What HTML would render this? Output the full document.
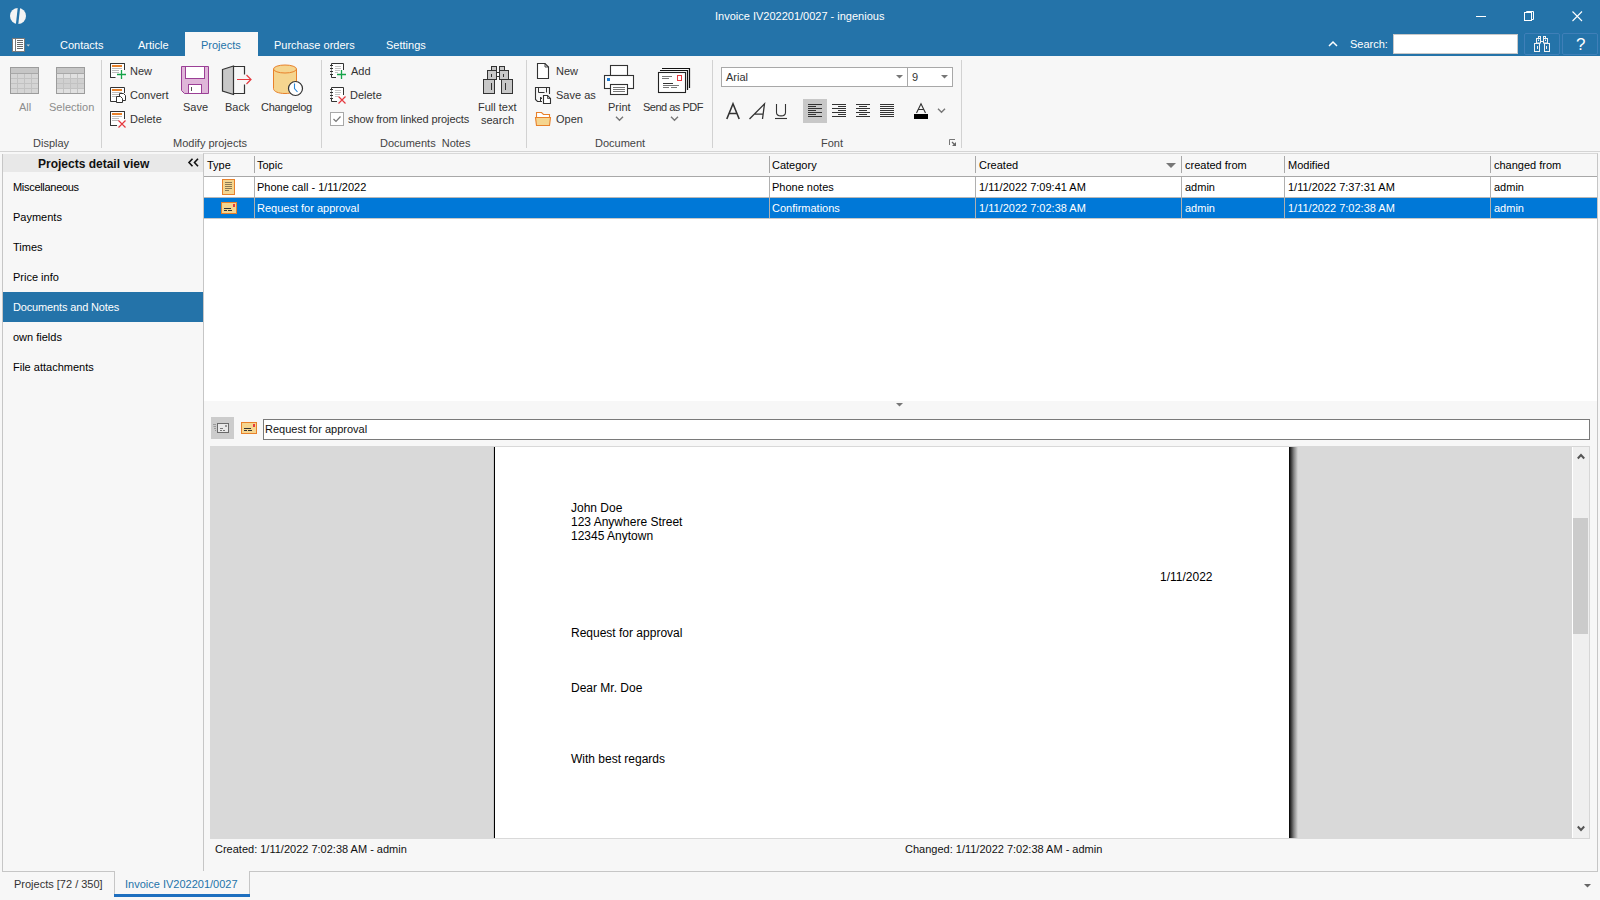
<!DOCTYPE html>
<html><head><meta charset="utf-8">
<style>
*{margin:0;padding:0;box-sizing:border-box}
html,body{width:1600px;height:900px;overflow:hidden;background:#f7f7f7;font-family:"Liberation Sans",sans-serif;font-size:11px;color:#000}
.a{position:absolute}
.t{position:absolute;white-space:nowrap;line-height:13px;font-size:11px}
.w{color:#fff}
svg{position:absolute;overflow:visible}
</style></head><body>

<!-- ===== TITLE BAR ===== -->
<div class="a" style="left:0;top:0;width:1600px;height:56px;background:#2473a9"></div>
<svg style="left:10px;top:8px" width="16" height="16" viewBox="0 0 16 16">
 <circle cx="8" cy="8" r="8" fill="#f4f4f4"/>
 <polygon points="7.8,-1 10.2,-1 8.2,17 5.8,17" fill="#2473a9"/>
</svg>
<div class="t w" style="left:715px;top:10px">Invoice IV202201/0027 - ingenious</div>
<!-- window controls -->
<div class="a" style="left:1476px;top:16px;width:10px;height:1px;background:#fff"></div>
<svg style="left:1523px;top:10px" width="12" height="12" viewBox="0 0 12 12">
 <rect x="1.5" y="2.5" width="7" height="8" fill="none" stroke="#fff" stroke-width="1"/>
 <path d="M3.5 2.5V1.5H10.5V9.5H8.5" fill="none" stroke="#fff" stroke-width="1"/>
</svg>
<svg style="left:1572px;top:11px" width="11" height="11" viewBox="0 0 11 11">
 <path d="M0.5 0.5L10 10M10 0.5L0.5 10" stroke="#fff" stroke-width="1.1"/>
</svg>

<!-- menu icon -->
<svg style="left:12px;top:38px" width="20" height="14" viewBox="0 0 20 14">
 <rect x="0.5" y="0.5" width="12" height="13" fill="#fff" stroke="#7a7a7a" stroke-width="1"/>
 <rect x="3" y="1" width="1" height="12" fill="#7a7a7a"/>
 <path d="M5 2.5h6M5 4.5h6M5 6.5h6M5 8.5h6M5 10.5h6" stroke="#6a6a6a" stroke-width="1"/>
 <polygon points="14.5,6.5 18,6.5 16.25,8.5" fill="#ccc"/>
</svg>

<!-- tabs -->
<div class="t w" style="left:60px;top:39px">Contacts</div>
<div class="t w" style="left:138px;top:39px">Article</div>
<div class="a" style="left:185px;top:32px;width:73px;height:24px;background:#f7f7f7"></div>
<div class="t" style="left:201px;top:39px;color:#2473a9">Projects</div>
<div class="t w" style="left:274px;top:39px">Purchase orders</div>
<div class="t w" style="left:386px;top:39px">Settings</div>

<!-- search area -->
<svg style="left:1328px;top:41px" width="10" height="6" viewBox="0 0 10 6">
 <path d="M1 5L5 1L9 5" fill="none" stroke="#fff" stroke-width="1.5"/>
</svg>
<div class="t w" style="left:1350px;top:38px">Search:</div>
<div class="a" style="left:1393px;top:34px;width:125px;height:20px;background:#fff;border:1px solid #c8c8c8"></div>
<div class="a" style="left:1524px;top:33px;width:36px;height:22px;border:1px solid #3f7fb8;border-radius:2px"></div>
<div class="a" style="left:1562px;top:33px;width:36px;height:22px;border:1px solid #3f7fb8;border-radius:2px"></div>
<svg style="left:1534px;top:36px" width="17" height="17" viewBox="0 0 17 17">
 <rect x="4.5" y="0.5" width="2" height="2" fill="none" stroke="#f2f2f2"/>
 <rect x="9.5" y="0.5" width="2" height="2" fill="none" stroke="#f2f2f2"/>
 <rect x="2.5" y="2.5" width="4" height="4.5" fill="none" stroke="#f2f2f2"/>
 <rect x="9.5" y="2.5" width="4" height="4.5" fill="none" stroke="#f2f2f2"/>
 <path d="M6.5 5.5H9.5" stroke="#f2f2f2"/>
 <rect x="0.5" y="7.5" width="5" height="8" fill="none" stroke="#f2f2f2"/>
 <rect x="10.5" y="7.5" width="5" height="8" fill="none" stroke="#f2f2f2"/>
 <path d="M4.5 3.5V5M11.5 3.5V5M3.5 10V13M12.5 10V13" stroke="#f2f2f2"/>
</svg>
<div class="t w" style="left:1576px;top:36px;font-size:17px;line-height:17px">?</div>

<!-- ===== RIBBON ===== -->
<!-- Display group -->
<svg style="left:10px;top:67px" width="30" height="28" viewBox="0 0 30 28">
 <rect x="0.5" y="0.5" width="28" height="26" fill="#d5d5d5" stroke="#9c9c9c"/>
 <rect x="1" y="1" width="27" height="5" fill="#c6c6c6"/>
 <path d="M1 6.5H28M1 11.5H28M1 16.5H28M1 21.5H28M7.5 7V26M14.5 7V26M21.5 7V26" stroke="#c2c2c2" stroke-width="1"/>
 <path d="M0.5 6.5H28.5" stroke="#a8a8a8"/>
</svg>
<svg style="left:56px;top:67px" width="30" height="28" viewBox="0 0 30 28">
 <rect x="0.5" y="0.5" width="28" height="26" fill="#d0d0d0" stroke="#9c9c9c"/>
 <rect x="1" y="1" width="27" height="5" fill="#c6c6c6"/>
 <rect x="1" y="7" width="27" height="4" fill="#e0e0e0"/>
 <rect x="1" y="22" width="27" height="4" fill="#e0e0e0"/>
 <path d="M1 6.5H28M1 11.5H28M1 16.5H28M1 21.5H28M7.5 7V26M14.5 7V26M21.5 7V26" stroke="#c2c2c2" stroke-width="1"/>
 <path d="M0.5 6.5H28.5" stroke="#a8a8a8"/>
</svg>
<div class="t" style="left:19px;top:101px;color:#8c8c8c">All</div>
<div class="t" style="left:49px;top:101px;color:#8c8c8c">Selection</div>
<div class="t" style="left:33px;top:137px;color:#444">Display</div>
<div class="a" style="left:101px;top:60px;width:1px;height:88px;background:#d2d2d2"></div>

<!-- Modify projects -->
<svg style="left:110px;top:63px" width="17" height="17" viewBox="0 0 17 17">
 <path d="M5.5 14.5H0.5V0.5H14.5V7" fill="#fff" stroke="#333"/>
 <rect x="1" y="1" width="13" height="13" fill="#fff"/>
 <path d="M0.5 14.5V0.5H14.5V7M0.5 14.5H5" fill="none" stroke="#333"/>
 <rect x="2" y="2" width="10" height="2" fill="#e8812b"/>
 <path d="M2 5.5H12M2 7.5H9M2 9.5H9" stroke="#bdbdbd"/>
 <path d="M7 11.5H16M11.5 7V16" stroke="#16a34a" stroke-width="1.3"/>
</svg>
<svg style="left:110px;top:87px" width="17" height="17" viewBox="0 0 17 17">
 <path d="M6 14.5H0.5V0.5H14.5V6" fill="#fff" stroke="#333"/>
 <rect x="2" y="2" width="10" height="2" fill="#e8812b"/>
 <path d="M2 5.5H12M2 7.5H9M2 9.5H7" stroke="#bdbdbd"/>
 <path d="M9.5 9.5V6.5H13.5L15.5 8.5V13.5H12.5" fill="#fff" stroke="#333"/>
 <path d="M6.5 9.5H10.5L12.5 11.5V15.5H6.5Z" fill="#fff" stroke="#333"/>
</svg>
<svg style="left:110px;top:111px" width="17" height="17" viewBox="0 0 17 17">
 <path d="M0.5 14.5V0.5H14.5V8M0.5 14.5H7" fill="#fff" stroke="#333"/>
 <rect x="1" y="1" width="13" height="13" fill="#fff"/>
 <path d="M0.5 14.5V0.5H14.5V8M0.5 14.5H6" fill="none" stroke="#333"/>
 <rect x="2" y="2" width="10" height="2" fill="#e8812b"/>
 <path d="M2 5.5H12M2 7.5H9M2 9.5H9" stroke="#bdbdbd"/>
 <path d="M8.5 9.5L15.5 16.5M15.5 9.5L8.5 16.5" stroke="#e5393f" stroke-width="1.2"/>
</svg>
<div class="t" style="left:130px;top:65px;color:#333">New</div>
<div class="t" style="left:130px;top:89px;color:#333">Convert</div>
<div class="t" style="left:130px;top:113px;color:#333">Delete</div>

<svg style="left:181px;top:66px" width="29" height="29" viewBox="0 0 29 29">
 <path d="M0.5 0.5H27.5V27.5H3.5L0.5 24.5Z" fill="#dfb6d9" stroke="#9b3f96"/>
 <rect x="4.5" y="0.5" width="19" height="12" fill="#fff" stroke="#9b3f96"/>
 <rect x="7.5" y="18.5" width="13" height="9" fill="#fff" stroke="#9b3f96"/>
 <path d="M10.5 21V25" stroke="#555"/>
</svg>
<svg style="left:222px;top:65px" width="31" height="31" viewBox="0 0 31 31">
 <path d="M11.5 1.5H22.5V9.5M22.5 19.5V28.5H11.5" fill="none" stroke="#333" stroke-width="1.2"/>
 <path d="M0.5 4.5L11.5 1V29.5L0.5 26Z" fill="#c8c8c8" stroke="#333" stroke-width="1.2"/>
 <path d="M15 14.5H29M24.5 10L29 14.5L24.5 19" fill="none" stroke="#e5393f" stroke-width="1.2"/>
</svg>
<svg style="left:273px;top:64px" width="32" height="33" viewBox="0 0 32 33">
 <path d="M0.5 5V24.5C0.5 27.5 5.5 29.5 12 29.5C18.5 29.5 23.5 27.5 23.5 24.5V5" fill="#f5d58f" stroke="#e8812b"/>
 <ellipse cx="12" cy="5" rx="11.5" ry="4" fill="#f5d58f" stroke="#e8812b"/>
 <circle cx="22.5" cy="24.5" r="7" fill="#fff" stroke="#333" stroke-width="1.2"/>
 <path d="M21.5 19.5V24.5L24.5 28" fill="none" stroke="#2b88d8" stroke-width="1.1"/>
</svg>
<div class="t" style="left:183px;top:101px;color:#333">Save</div>
<div class="t" style="left:225px;top:101px;color:#333">Back</div>
<div class="t" style="left:261px;top:101px;color:#333;letter-spacing:-0.25px">Changelog</div>
<div class="t" style="left:173px;top:137px;color:#444">Modify projects</div>
<div class="a" style="left:321px;top:60px;width:1px;height:88px;background:#d2d2d2"></div>

<!-- Documents Notes -->
<svg style="left:330px;top:63px" width="17" height="17" viewBox="0 0 17 17">
 <path d="M6 14.5H1.5V0.5H13.5V7" fill="#fff" stroke="#333"/>
 <path d="M0 2.5H3M0 5.5H3M0 8.5H3M0 11.5H3" stroke="#333"/>
 <path d="M1.5 3.5V4.5M1.5 6.5V7.5M1.5 9.5V10.5" stroke="#f7f7f7"/>
 <path d="M5 3.5H11M5 5.5H11M5 7.5H10M5 9.5H8" stroke="#c4c4c4"/>
 <path d="M7 11.5H16M11.5 7V16" stroke="#16a34a" stroke-width="1.3"/>
</svg>
<svg style="left:330px;top:87px" width="17" height="17" viewBox="0 0 17 17">
 <path d="M7 14.5H1.5V0.5H13.5V8" fill="#fff" stroke="#333"/>
 <path d="M0 2.5H3M0 5.5H3M0 8.5H3M0 11.5H3" stroke="#333"/>
 <path d="M1.5 3.5V4.5M1.5 6.5V7.5M1.5 9.5V10.5" stroke="#f7f7f7"/>
 <path d="M5 3.5H11M5 5.5H11M5 7.5H10M5 9.5H8" stroke="#c4c4c4"/>
 <path d="M8.5 9.5L15.5 16.5M15.5 9.5L8.5 16.5" stroke="#e5393f" stroke-width="1.2"/>
</svg>
<svg style="left:330px;top:112px" width="15" height="15" viewBox="0 0 15 15">
 <rect x="0.5" y="0.5" width="13" height="13" fill="#fff" stroke="#a8a8a8"/>
 <path d="M3.5 7L6 9.5L10.5 4.5" fill="none" stroke="#777" stroke-width="1.2"/>
</svg>
<div class="t" style="left:351px;top:65px;color:#333">Add</div>
<div class="t" style="left:350px;top:89px;color:#333">Delete</div>
<div class="t" style="left:348px;top:113px;color:#333;letter-spacing:-0.12px">show from linked projects</div>
<svg style="left:483px;top:66px" width="31" height="29" viewBox="0 0 31 29">
 <rect x="8.5" y="0.5" width="5" height="4" fill="#c8c8c8" stroke="#333"/>
 <rect x="16.5" y="0.5" width="5" height="4" fill="#c8c8c8" stroke="#333"/>
 <rect x="4.5" y="4.5" width="9" height="9" fill="#c8c8c8" stroke="#333"/>
 <rect x="16.5" y="4.5" width="9" height="9" fill="#c8c8c8" stroke="#333"/>
 <rect x="13.5" y="6.5" width="3" height="4" fill="#fff" stroke="#333"/>
 <rect x="0.5" y="13.5" width="11" height="14" fill="#c8c8c8" stroke="#333"/>
 <rect x="18.5" y="13.5" width="11" height="14" fill="#c8c8c8" stroke="#333"/>
 <path d="M8.5 8V11M20.5 8V11M8.5 17V24M22.5 17V24" stroke="#333"/>
</svg>
<div class="t" style="left:478px;top:101px;color:#333">Full text</div>
<div class="t" style="left:481px;top:114px;color:#333">search</div>
<div class="t" style="left:380px;top:137px;color:#444">Documents&nbsp; Notes</div>
<div class="a" style="left:526px;top:60px;width:1px;height:88px;background:#d2d2d2"></div>

<!-- Document -->
<svg style="left:537px;top:63px" width="13" height="17" viewBox="0 0 13 17">
 <path d="M0.5 0.5H8L11.5 4V15.5H0.5Z" fill="#fff" stroke="#333" stroke-width="1.1"/>
 <path d="M8 0.5V4H11.5" fill="none" stroke="#333" stroke-width="0.9"/>
</svg>
<svg style="left:535px;top:87px" width="17" height="17" viewBox="0 0 17 17">
 <path d="M7 14.5H2.5L0.5 12.5V0.5H14.5V7" fill="none" stroke="#333" stroke-width="1.1"/>
 <path d="M3.5 0.5V5.5H9.5M11.5 0.5V5.5" fill="none" stroke="#333"/>
 <path d="M5.5 14.5V11.5H7" fill="none" stroke="#333"/>
 <rect x="5" y="10" width="1.5" height="2" fill="#333"/>
 <path d="M8.5 8.5H12.5L15.5 11.5V16.5H8.5Z" fill="#fff" stroke="#333" stroke-width="1.1"/>
 <path d="M12.5 8.5V11.5H15.5" fill="none" stroke="#333" stroke-width="0.8"/>
</svg>
<svg style="left:535px;top:112px" width="17" height="15" viewBox="0 0 17 15">
 <path d="M1.5 5V0.5H6.5L8.5 2.5H14.5V5" fill="#fff" stroke="#e8812b" stroke-width="1.1"/>
 <path d="M0.5 5.5H15.5L14.5 13.5H1.5Z" fill="#f5d58f" stroke="#e8812b" stroke-width="1.1"/>
</svg>
<div class="t" style="left:556px;top:65px;color:#333">New</div>
<div class="t" style="left:556px;top:89px;color:#333">Save as</div>
<div class="t" style="left:556px;top:113px;color:#333">Open</div>
<svg style="left:604px;top:65px" width="31" height="31" viewBox="0 0 31 31">
 <rect x="6.5" y="0.5" width="17" height="10" fill="#fff" stroke="#333" stroke-width="1.1"/>
 <rect x="0.5" y="10.5" width="29" height="13" fill="#fff" stroke="#333" stroke-width="1.1"/>
 <rect x="3" y="13" width="3" height="3" fill="#1e7ad0"/>
 <rect x="6.5" y="19.5" width="17" height="10" fill="#fff" stroke="#333" stroke-width="1.1"/>
 <path d="M9 22.5H21M9 24.5H21M9 26.5H21" stroke="#777"/>
</svg>
<svg style="left:658px;top:68px" width="33" height="26" viewBox="0 0 33 26">
 <path d="M4 0.5H31.5V20" fill="none" stroke="#111" stroke-width="1.2"/>
 <path d="M2 2.5H29.5V22" fill="none" stroke="#111" stroke-width="1.2"/>
 <rect x="0.5" y="4.5" width="27" height="20" fill="#fff" stroke="#222" stroke-width="1.1"/>
 <rect x="19.5" y="7.5" width="4" height="5" fill="#fff" stroke="#e5393f"/>
 <path d="M4 8.5H14M4 10.5H11M5 15.5H15M5 17.5H21M5 19.5H11M13 19.5H19" stroke="#777"/>
 <path d="M5 15.5H15" stroke="#333"/>
</svg>
<div class="t" style="left:608px;top:101px;color:#333">Print</div>
<div class="t" style="left:643px;top:101px;color:#333;letter-spacing:-0.5px">Send as PDF</div>
<svg style="left:615px;top:116px" width="9" height="5" viewBox="0 0 9 5"><path d="M1 0.8L4.5 4.2L8 0.8" fill="none" stroke="#777" stroke-width="1.4"/></svg>
<svg style="left:670px;top:116px" width="9" height="5" viewBox="0 0 9 5"><path d="M1 0.8L4.5 4.2L8 0.8" fill="none" stroke="#777" stroke-width="1.4"/></svg>
<div class="t" style="left:595px;top:137px;color:#444">Document</div>
<div class="a" style="left:712px;top:60px;width:1px;height:88px;background:#d2d2d2"></div>

<!-- Font -->
<div class="a" style="left:721px;top:67px;width:187px;height:20px;background:#fff;border:1px solid #a8a8a8"></div>
<div class="a" style="left:907px;top:67px;width:46px;height:20px;background:#fff;border:1px solid #a8a8a8"></div>
<div class="t" style="left:726px;top:71px;color:#333">Arial</div>
<div class="t" style="left:912px;top:71px;color:#333">9</div>
<svg style="left:896px;top:75px" width="8" height="4" viewBox="0 0 8 4"><polygon points="0,0 7,0 3.5,3.5" fill="#777"/></svg>
<svg style="left:941px;top:75px" width="8" height="4" viewBox="0 0 8 4"><polygon points="0,0 7,0 3.5,3.5" fill="#777"/></svg>
<svg style="left:726px;top:103px" width="15" height="17" viewBox="0 0 15 17">
 <path d="M0.8 16L7 0.8L13.2 16M3.2 10.5H10.8" fill="none" stroke="#333" stroke-width="1.6"/>
</svg>
<svg style="left:749px;top:103px" width="17" height="17" viewBox="0 0 17 17">
 <path d="M0.5 16L15.5 0.8L13.5 16M5 11.2H13.8" fill="none" stroke="#333" stroke-width="1.3"/>
</svg>
<svg style="left:775px;top:103px" width="13" height="17" viewBox="0 0 13 17">
 <path d="M1.5 1V9.5C1.5 14 10.5 14 10.5 9.5V1" fill="none" stroke="#333" stroke-width="1.1"/>
 <path d="M0 15.5H12" stroke="#333" stroke-width="1.1"/>
</svg>
<div class="a" style="left:803px;top:99px;width:24px;height:24px;background:#c8c8c8"></div>
<svg style="left:808px;top:104px" width="15" height="14" viewBox="0 0 15 14">
 <path d="M0 0.5H14M0 2.5H8M0 4.5H14M0 6.5H8M0 8.5H14M0 10.5H8M0 12.5H14" stroke="#333"/>
</svg>
<svg style="left:832px;top:104px" width="15" height="14" viewBox="0 0 15 14">
 <path d="M0 0.5H14M6 2.5H14M0 4.5H14M6 6.5H14M0 8.5H14M6 10.5H14M0 12.5H14" stroke="#333"/>
</svg>
<svg style="left:856px;top:104px" width="15" height="14" viewBox="0 0 15 14">
 <path d="M0 0.5H14M3 2.5H11M0 4.5H14M3 6.5H11M0 8.5H14M3 10.5H11M0 12.5H14" stroke="#333"/>
</svg>
<svg style="left:880px;top:104px" width="15" height="14" viewBox="0 0 15 14">
 <path d="M0 0.5H14M0 2.5H14M0 4.5H14M0 6.5H14M0 8.5H14M0 10.5H14M0 12.5H14" stroke="#333"/>
</svg>
<svg style="left:914px;top:103px" width="15" height="17" viewBox="0 0 15 17">
 <path d="M2.5 10L7 0.8L11.5 10M4.2 6.5H9.8" fill="none" stroke="#333" stroke-width="1.1"/>
 <rect x="0" y="11" width="14" height="5" fill="#000"/>
</svg>
<svg style="left:937px;top:108px" width="9" height="5" viewBox="0 0 9 5"><path d="M1 0.8L4.5 4.2L8 0.8" fill="none" stroke="#777" stroke-width="1.4"/></svg>
<div class="t" style="left:821px;top:137px;color:#444">Font</div>
<svg style="left:949px;top:139px" width="8" height="8" viewBox="0 0 8 8">
 <path d="M0.5 6V0.5H6" fill="none" stroke="#777"/>
 <path d="M3 3L5.5 5.5" stroke="#666" stroke-width="1.2"/>
 <polygon points="7,3 7,7 3,7" fill="#666"/>
</svg>
<div class="a" style="left:961px;top:60px;width:1px;height:88px;background:#d2d2d2"></div>

<div class="a" style="left:0;top:151px;width:1600px;height:1px;background:#d4d4d4"></div>

<!-- ===== SIDEBAR ===== -->
<div class="a" style="left:2px;top:154px;width:202px;height:718px;border-left:1px solid #c6c6c6;border-right:1px solid #c6c6c6;border-bottom:1px solid #c6c6c6"></div>
<div class="a" style="left:3px;top:154px;width:200px;height:18px;background:#e8e8e8"></div>
<div class="t" style="left:38px;top:158px;font-weight:bold;color:#111;font-size:12px">Projects detail view</div>
<svg style="left:188px;top:158px" width="11" height="9" viewBox="0 0 11 9">
 <path d="M4.5 0.8L1 4.5L4.5 8.2M10 0.8L6.5 4.5L10 8.2" fill="none" stroke="#111" stroke-width="1.6"/>
</svg>
<div class="t" style="left:13px;top:181px;letter-spacing:-0.3px">Miscellaneous</div>
<div class="t" style="left:13px;top:211px">Payments</div>
<div class="t" style="left:13px;top:241px">Times</div>
<div class="t" style="left:13px;top:271px">Price info</div>
<div class="a" style="left:3px;top:292px;width:200px;height:30px;background:#2473a9"></div>
<div class="t w" style="left:13px;top:301px;letter-spacing:-0.15px">Documents and Notes</div>
<div class="t" style="left:13px;top:331px">own fields</div>
<div class="t" style="left:13px;top:361px">File attachments</div>


<!-- ===== GRID ===== -->
<div class="a" style="left:203px;top:153px;width:1395px;height:248px;background:#fff;border-left:1px solid #c6c6c6;border-top:1px solid #d8d8d8;border-right:1px solid #c6c6c6"></div>
<div class="a" style="left:204px;top:154px;width:1393px;height:23px;background:#f7f7f7;border-bottom:1px solid #a8a8a8"></div>


<!-- header -->
<div class="t" style="left:207px;top:159px">Type</div>
<div class="t" style="left:257px;top:159px">Topic</div>
<div class="t" style="left:772px;top:159px">Category</div>
<div class="t" style="left:979px;top:159px">Created</div>
<div class="t" style="left:1185px;top:159px">created from</div>
<div class="t" style="left:1288px;top:159px">Modified</div>
<div class="t" style="left:1494px;top:159px">changed from</div>
<svg style="left:1166px;top:163px" width="10" height="5" viewBox="0 0 10 5"><polygon points="0,0 10,0 5,5" fill="#777"/></svg>
<div class="a" style="left:254px;top:156px;width:1px;height:17px;background:#a8a8a8"></div>
<div class="a" style="left:769px;top:156px;width:1px;height:17px;background:#a8a8a8"></div>
<div class="a" style="left:975px;top:156px;width:1px;height:17px;background:#a8a8a8"></div>
<div class="a" style="left:1181px;top:156px;width:1px;height:17px;background:#a8a8a8"></div>
<div class="a" style="left:1284px;top:156px;width:1px;height:17px;background:#a8a8a8"></div>
<div class="a" style="left:1490px;top:156px;width:1px;height:17px;background:#a8a8a8"></div>
<!-- row 1 -->
<div class="a" style="left:204px;top:197px;width:1393px;height:1px;background:#b8b8b8"></div>
<div class="a" style="left:204px;top:198px;width:1393px;height:20px;background:#0078d7"></div>
<div class="a" style="left:204px;top:218px;width:1393px;height:1px;background:#c8c8c8"></div>
<div class="a" style="left:254px;top:177px;width:1px;height:41px;background:#b0b0b0"></div>
<div class="a" style="left:769px;top:177px;width:1px;height:41px;background:#b0b0b0"></div>
<div class="a" style="left:975px;top:177px;width:1px;height:41px;background:#b0b0b0"></div>
<div class="a" style="left:1181px;top:177px;width:1px;height:41px;background:#b0b0b0"></div>
<div class="a" style="left:1284px;top:177px;width:1px;height:41px;background:#b0b0b0"></div>
<div class="a" style="left:1490px;top:177px;width:1px;height:41px;background:#b0b0b0"></div>
<svg style="left:222px;top:179px" width="14" height="17" viewBox="0 0 14 17">
 <rect x="0.5" y="0.5" width="12" height="15" fill="#f5d58f" stroke="#e8812b"/>
 <path d="M3 3.5H10M3 5.5H10M3 7.5H10M3 9.5H10M3 11.5H7" stroke="#8a7a55"/>
</svg>
<div class="t" style="left:257px;top:181px">Phone call - 1/11/2022</div>
<div class="t" style="left:772px;top:181px">Phone notes</div>
<div class="t" style="left:979px;top:181px">1/11/2022 7:09:41 AM</div>
<div class="t" style="left:1185px;top:181px">admin</div>
<div class="t" style="left:1288px;top:181px">1/11/2022 7:37:31 AM</div>
<div class="t" style="left:1494px;top:181px">admin</div>
<svg style="left:221px;top:202px" width="17" height="13" viewBox="0 0 17 13">
 <rect x="0.5" y="0.5" width="15" height="11" fill="#f5d58f" stroke="#e8812b"/>
 <rect x="12" y="2" width="2" height="3" fill="#e5393f"/>
 <path d="M3 6.5H10M3 8.5H6M7 8.5H11" stroke="#333"/>
</svg>
<div class="t w" style="left:257px;top:202px">Request for approval</div>
<div class="t w" style="left:772px;top:202px">Confirmations</div>
<div class="t w" style="left:979px;top:202px">1/11/2022 7:02:38 AM</div>
<div class="t w" style="left:1185px;top:202px">admin</div>
<div class="t w" style="left:1288px;top:202px">1/11/2022 7:02:38 AM</div>
<div class="t w" style="left:1494px;top:202px">admin</div>

<!-- ===== DOC AREA ===== -->
<div class="a" style="left:204px;top:401px;width:1393px;height:470px;background:#f7f7f7"></div>
<svg style="left:896px;top:403px" width="8" height="4" viewBox="0 0 8 4"><polygon points="0,0 7,0 3.5,3.5" fill="#777"/></svg>
<div class="a" style="left:211px;top:417px;width:23px;height:22px;background:#cccccc"></div>
<svg style="left:213px;top:423px" width="18" height="14" viewBox="0 0 18 14">
 <path d="M0 1.5H3M0.5 3.5H3M1 5.5H3M2 7.5H3" stroke="#999"/>
 <rect x="4.5" y="0.5" width="11" height="9" fill="#e8e8e8" stroke="#6a6a6a"/>
 <rect x="12" y="2" width="2" height="2" fill="#999"/>
 <path d="M7 5.5H10M7 7.5H9M10 7.5H12" stroke="#777"/>
</svg>
<svg style="left:241px;top:422px" width="17" height="13" viewBox="0 0 17 13">
 <rect x="0.5" y="0.5" width="15" height="11" fill="#f5d58f" stroke="#e8812b"/>
 <rect x="12" y="2" width="2" height="3" fill="#e5393f"/>
 <path d="M3 6.5H10M3 8.5H6M7 8.5H11" stroke="#333"/>
</svg>
<div class="a" style="left:263px;top:419px;width:1327px;height:21px;background:#fff;border:1px solid #7a7a7a"></div>
<div class="t" style="left:265px;top:423px;color:#111">Request for approval</div>
<!-- viewer -->
<div class="a" style="left:210px;top:446px;width:1380px;height:393px;background:#efefef;border:1px solid #d6d6d6"></div>
<div class="a" style="left:1572px;top:447px;width:1px;height:391px;background:#fff"></div>
<div class="a" style="left:210px;top:446px;width:1362px;height:393px;background:#d9d9d9"></div>
<div class="a" style="left:493px;top:447px;width:1px;height:391px;background:#c6c6c6"></div>
<div class="a" style="left:494px;top:447px;width:1px;height:391px;background:#000"></div>
<div class="a" style="left:495px;top:447px;width:794px;height:391px;background:#fff"></div>
<div class="a" style="left:1289px;top:447px;width:9px;height:391px;background:linear-gradient(to right,#000 0px,#2a2a2a 1.5px,#888 5px,#d9d9d9 9px)"></div>
<div class="a" style="left:1573px;top:518px;width:15px;height:116px;background:#cbcbcb"></div>
<svg style="left:1577px;top:452px" width="8" height="8" viewBox="0 0 8 8"><path d="M0.8 6.5L4 3L7.2 6.5" fill="none" stroke="#555" stroke-width="2"/></svg>
<svg style="left:1577px;top:825px" width="8" height="8" viewBox="0 0 8 8"><path d="M0.8 1.5L4 5L7.2 1.5" fill="none" stroke="#555" stroke-width="2"/></svg>
<div class="t" style="left:571px;top:501px;font-size:12px;line-height:14px;color:#000">John Doe</div>
<div class="t" style="left:571px;top:515px;font-size:12px;line-height:14px;color:#000">123 Anywhere Street</div>
<div class="t" style="left:571px;top:529px;font-size:12px;line-height:14px;color:#000">12345 Anytown</div>
<div class="t" style="left:1160px;top:570px;font-size:12px;line-height:14px;color:#000">1/11/2022</div>
<div class="t" style="left:571px;top:626px;font-size:12px;line-height:14px;color:#000">Request for approval</div>
<div class="t" style="left:571px;top:681px;font-size:12px;line-height:14px;color:#000">Dear Mr. Doe</div>
<div class="t" style="left:571px;top:752px;font-size:12px;line-height:14px;color:#000">With best regards</div>
<!-- status -->
<div class="t" style="left:215px;top:843px;color:#111">Created: 1/11/2022 7:02:38 AM - admin</div>
<div class="t" style="left:905px;top:843px;color:#111">Changed: 1/11/2022 7:02:38 AM - admin</div>
<div class="a" style="left:1597px;top:401px;width:1px;height:471px;background:#c6c6c6"></div>

<!-- ===== BOTTOM TABS ===== -->
<div class="a" style="left:0;top:871px;width:1600px;height:29px;background:#f7f7f7"></div>
<div class="a" style="left:2px;top:871px;width:113px;height:1px;background:#c6c6c6"></div>
<div class="a" style="left:249px;top:871px;width:1349px;height:1px;background:#c6c6c6"></div>
<div class="a" style="left:114px;top:871px;width:1px;height:26px;background:#c6c6c6"></div>
<div class="a" style="left:249px;top:871px;width:1px;height:26px;background:#c6c6c6"></div>
<div class="a" style="left:114px;top:894px;width:136px;height:3px;background:#1e6fbf"></div>
<div class="t" style="left:14px;top:878px;color:#333">Projects [72 / 350]</div>
<div class="t" style="left:125px;top:878px;color:#2473a9">Invoice IV202201/0027</div>
<svg style="left:1584px;top:884px" width="8" height="4" viewBox="0 0 8 4"><polygon points="0,0 7,0 3.5,3.5" fill="#666"/></svg>

</body></html>
